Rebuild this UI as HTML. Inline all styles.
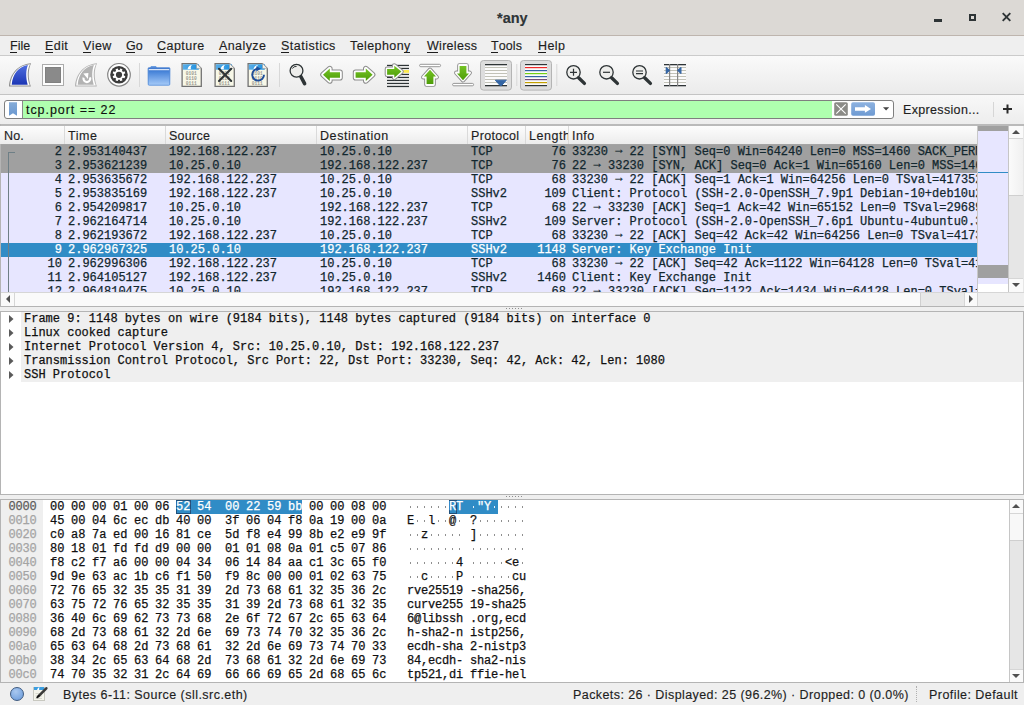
<!DOCTYPE html><html><head><meta charset="utf-8"><title>any</title><style>
*{margin:0;padding:0;box-sizing:border-box}
html,body{width:1024px;height:705px;overflow:hidden}
body{position:relative;background:#efefef;font-family:"Liberation Sans",sans-serif;font-size:12.5px;letter-spacing:.4px;color:#1e1e1e}
.a{position:absolute}
.m{font-family:"Liberation Mono",monospace;font-size:12px;letter-spacing:0;white-space:pre;-webkit-text-stroke:.25px currentColor}
.t{white-space:pre;line-height:14px;-webkit-text-stroke:.15px currentColor}
u{text-decoration:none;position:relative;display:inline-block}u::after{content:'';position:absolute;left:0;right:1px;top:13px;height:1px;background:#1e1e1e}
svg{position:absolute;overflow:visible}
</style></head><body><div class="a" style="left:0;top:0;width:1024px;height:36px;background:#dcd9d5;border-bottom:1px solid #beb5ae"></div><div class="a t" style="left:497px;top:9px;font-weight:bold;font-size:14.5px;letter-spacing:0;color:#2e3436;line-height:18px">*any</div><div class="a" style="left:934px;top:19px;width:8px;height:2.6px;background:#2e3436"></div><div class="a" style="left:969px;top:14px;width:6.5px;height:6.5px;border:2px solid #2e3436"></div><svg style="left:1001px;top:12px" width="10" height="10"><path d="M1.7 1.2L9.3 8.8M9.3 1.2L1.7 8.8" stroke="#2e3436" stroke-width="1.9"/></svg><div class="a" style="left:0;top:36px;width:1024px;height:19px;background:#efefef"></div><div class="a t" style="left:10px;top:39px;letter-spacing:-0.015px"><u>F</u>ile</div><div class="a t" style="left:45px;top:39px;letter-spacing:0.425px"><u>E</u>dit</div><div class="a t" style="left:83px;top:39px;letter-spacing:0.402px"><u>V</u>iew</div><div class="a t" style="left:126px;top:39px;letter-spacing:-0.017px"><u>G</u>o</div><div class="a t" style="left:157px;top:39px;letter-spacing:0.464px"><u>C</u>apture</div><div class="a t" style="left:219px;top:39px;letter-spacing:0.402px"><u>A</u>nalyze</div><div class="a t" style="left:281px;top:39px;letter-spacing:0.484px"><u>S</u>tatistics</div><div class="a t" style="left:350px;top:39px;letter-spacing:0.409px">Telephon<u>y</u></div><div class="a t" style="left:427px;top:39px;letter-spacing:0.286px"><u>W</u>ireless</div><div class="a t" style="left:491px;top:39px;letter-spacing:0.076px"><u>T</u>ools</div><div class="a t" style="left:538px;top:39px;letter-spacing:0.413px"><u>H</u>elp</div><div class="a" style="left:0;top:55px;width:1024px;height:1px;background:#cbcbcb"></div><div class="a" style="left:0;top:56px;width:1024px;height:38px;background:linear-gradient(#fafafa,#ebebeb)"></div><div class="a" style="left:0;top:94px;width:1024px;height:1px;background:#c4c4c4"></div><svg style="left:0;top:0" width="700" height="95" viewBox="0 0 700 95">
<defs>
<linearGradient id="gb" x1="0" y1="0" x2="0" y2="1"><stop offset="0" stop-color="#4f6ee0"/><stop offset="1" stop-color="#1c36b4"/></linearGradient>
<linearGradient id="gf" x1="0" y1="0" x2="0" y2="1"><stop offset="0" stop-color="#2f6cc8"/><stop offset="0.25" stop-color="#4a86da"/><stop offset="1" stop-color="#a9cdf9"/></linearGradient>
<linearGradient id="gbar" x1="0" y1="0" x2="1" y2="0"><stop offset="0" stop-color="#5aaee8"/><stop offset="1" stop-color="#1b8fe0"/></linearGradient>
<linearGradient id="gg" x1="0" y1="0" x2="0" y2="1"><stop offset="0" stop-color="#74c324"/><stop offset="1" stop-color="#4d9c08"/></linearGradient>
<g id="file">
 <path d="M0.6,0.6 H15 L19.8,5.4 V23.4 H0.6 Z" fill="#f8f8e8" stroke="#727272" stroke-width="1.3"/>
 <rect x="1.3" y="1.3" width="16" height="5.4" fill="url(#gbar)"/>
 <path d="M15,0.6 V5.4 H19.8 Z" fill="#f4f4ee" stroke="#9a9a9a" stroke-width=".6"/>
 <path d="M6,6.3 C6.5,3.5 8.5,2 10.5,2 C9,3.5 9,5 9.5,6.3 Z" fill="#fff"/>
 <text x="4.2" y="12.2" font-family="Liberation Mono" font-size="4.6" fill="#9a9a92" letter-spacing="0" font-weight="bold">0101</text>
 <text x="4.2" y="17" font-family="Liberation Mono" font-size="4.6" fill="#9a9a92" letter-spacing="0" font-weight="bold">0110</text>
 <text x="4.2" y="21.5" font-family="Liberation Mono" font-size="4.6" fill="#9a9a92" letter-spacing="0" font-weight="bold">0111</text>
</g>
</defs>
<!-- shark fin -->
<path d="M9,86.6 C9.6,74 18,64 31.1,63.2 C28,70 28,78 30.9,86.6 Z" fill="#8e8e8e"/>
<path d="M10.2,85.6 C10.9,74 18.5,65 30,64.2 C27,70 27,78 29.8,85.6 Z" fill="#fff"/>
<path d="M11.7,84.7 C12.5,74 19,66.5 27.9,65.1 C26,70 25.5,77 27.7,84.7 Z" fill="url(#gb)"/>
<!-- stop -->
<rect x="42.5" y="64.5" width="21" height="21" fill="#fdfdfd" stroke="#ababab" stroke-width="1"/>
<rect x="45.5" y="67.5" width="15" height="15" fill="#8a8a8a" stroke="#808080" stroke-width="1"/>
<!-- restart fin -->
<path d="M75,86.6 C75.6,74 84,64 97.1,63.2 C94,70 94,78 96.9,86.6 Z" fill="#b4b4b4"/>
<path d="M76.2,85.6 C76.9,74 84.5,65 96,64.2 C93,70 93,78 95.8,85.6 Z" fill="#fff"/>
<path d="M77.7,84.7 C78.5,74 85,66.5 93.9,65.1 C92,70 91.5,77 93.7,84.7 Z" fill="#b3b3b3"/>
<path d="M83.6,77.6 A3.4,3.4 0 1 0 90,77.4" fill="none" stroke="#fff" stroke-width="2.2"/>
<path d="M83.3,73.6 L88.4,72.9 L87.9,79 Z" fill="#fff"/>
<!-- gear -->
<circle cx="119" cy="74.8" r="11.3" fill="#fff" stroke="#848484" stroke-width="1.2"/>
<circle cx="119" cy="74.8" r="8.8" fill="#3b3b3b"/>
<g transform="translate(119 74.8) rotate(22.5)" fill="#fff">
 <circle r="4.9"/>
 <rect x="-1.2" y="-6.4" width="2.4" height="12.8" rx=".4"/>
 <rect x="-1.2" y="-6.4" width="2.4" height="12.8" rx=".4" transform="rotate(45)"/>
 <rect x="-1.2" y="-6.4" width="2.4" height="12.8" rx=".4" transform="rotate(90)"/>
 <rect x="-1.2" y="-6.4" width="2.4" height="12.8" rx=".4" transform="rotate(135)"/>
</g>
<circle cx="119" cy="74.8" r="3.1" fill="#3b3b3b"/>
<!-- separator -->
<rect x="139" y="63" width="1" height="24" fill="#d8d8d8"/>
<!-- folder -->
<path d="M150,68 L151,66 H156 L157,68 Z" fill="#6d9ee0"/>
<rect x="147.8" y="67.6" width="22.4" height="18" rx="1" fill="url(#gf)"/>
<rect x="148.5" y="69.2" width="21" height="1" fill="#fff"/>
<rect x="148.3" y="68" width="21.4" height="17.2" rx="1" fill="none" stroke="#5b8fd8" stroke-width=".8"/>
<use href="#file" x="181.5" y="63"/>
<use href="#file" x="214.5" y="63"/>
<use href="#file" x="247.5" y="63"/>
<path d="M219,68.8 L231.2,81 M231.2,68.8 L219,81" stroke="#2e3436" stroke-width="2.1" stroke-linecap="round"/>
<path d="M264,74.7 A5.9,5.9 0 1 1 257.6,68.8" fill="none" stroke="#1f4e9a" stroke-width="1.9"/>
<path d="M256.3,66.2 L261,68.8 L256.3,71.4 Z" fill="#1f4e9a"/>
<!-- separator -->
<rect x="279" y="63" width="1" height="24" fill="#d8d8d8"/>
<!-- magnifier -->
<path d="M300.8,76.5 L304.6,83.6" stroke="#2e3436" stroke-width="3.6" stroke-linecap="round"/>
<circle cx="296.5" cy="70.7" r="6.4" fill="#eeeeec" stroke="#2e3436" stroke-width="1.3"/>
<path d="M292.3,68.6 A4.4,4.4 0 0 1 296.6,66.4" fill="none" stroke="#2e3436" stroke-width="1"/>
<!-- back arrow -->
<path d="M323,74.7 L329.8,68.6 V72.3 H340 V77.7 H329.8 V80.9 Z" fill="#fff" stroke="#8c8c8c" stroke-width="5.6" stroke-linejoin="round"/>
<path d="M323,74.7 L329.8,68.6 V72.3 H340 V77.7 H329.8 V80.9 Z" fill="#fff" stroke="#fdfdfd" stroke-width="3.6" stroke-linejoin="round"/>
<path d="M323,74.7 L329.8,68.6 V72.3 H340 V77.7 H329.8 V80.9 Z" fill="url(#gg)"/>
<!-- fwd arrow -->
<g transform="translate(695.6 0) scale(-1 1)">
<path d="M323,74.7 L329.8,68.6 V72.3 H340 V77.7 H329.8 V80.9 Z" fill="#fff" stroke="#8c8c8c" stroke-width="5.6" stroke-linejoin="round"/>
<path d="M323,74.7 L329.8,68.6 V72.3 H340 V77.7 H329.8 V80.9 Z" fill="#fff" stroke="#fdfdfd" stroke-width="3.6" stroke-linejoin="round"/>
<path d="M323,74.7 L329.8,68.6 V72.3 H340 V77.7 H329.8 V80.9 Z" fill="url(#gg)"/>
</g>
<!-- goto packet -->
<rect x="387" y="64" width="22" height="23" fill="#fcfcfc"/>
<g fill="#2e3436">
<rect x="387" y="64.8" width="22" height="1.3"/><rect x="387" y="67.8" width="22" height="1.3"/>
<rect x="387" y="73.8" width="22" height="1.3"/><rect x="387" y="76.8" width="22" height="1.3"/><rect x="387" y="79.8" width="22" height="1.3"/>
<rect x="387" y="82.8" width="22" height="1.3"/><rect x="387" y="85.8" width="22" height="1.3"/>
</g>
<rect x="403.3" y="70" width="5.7" height="2.8" fill="#fce94f"/>
<path d="M387.1,68.9 H394.3 V65.7 L401.4,71.6 L394.3,77.7 V74.7 H387.1 Z" fill="#fff" stroke="#8c8c8c" stroke-width="4.8" stroke-linejoin="round"/>
<path d="M387.1,68.9 H394.3 V65.7 L401.4,71.6 L394.3,77.7 V74.7 H387.1 Z" fill="#fff" stroke="#fdfdfd" stroke-width="2.8" stroke-linejoin="round"/>
<path d="M387.1,68.9 H394.3 V65.7 L401.4,71.6 L394.3,77.7 V74.7 H387.1 Z" fill="url(#gg)"/>
<!-- first packet (up) -->
<rect x="419.6" y="64.3" width="21" height="2.4" rx="1.2" fill="#fff" stroke="#8c8c8c" stroke-width=".9"/>
<path d="M430,69.8 L436.7,77.2 H433.6 V84.6 H426.4 V77.2 H423.3 Z" fill="#fff" stroke="#8c8c8c" stroke-width="4.4" stroke-linejoin="round"/>
<path d="M430,69.8 L436.7,77.2 H433.6 V84.6 H426.4 V77.2 H423.3 Z" fill="#fff" stroke="#fdfdfd" stroke-width="2.6" stroke-linejoin="round"/>
<path d="M430,69.8 L436,76.6 H433.4 V84 H426.6 V76.6 H424 Z" fill="url(#gg)"/>
<!-- last packet (down) -->
<rect x="452.6" y="83.4" width="21" height="2.4" rx="1.2" fill="#fff" stroke="#8c8c8c" stroke-width=".9"/>
<path d="M463,80.2 L469.7,72.8 H466.6 V65.4 H459.4 V72.8 H456.3 Z" fill="#fff" stroke="#8c8c8c" stroke-width="4.4" stroke-linejoin="round"/>
<path d="M463,80.2 L469.7,72.8 H466.6 V65.4 H459.4 V72.8 H456.3 Z" fill="#fff" stroke="#fdfdfd" stroke-width="2.6" stroke-linejoin="round"/>
<path d="M463,80.2 L469,73.4 H466.4 V66 H459.6 V73.4 H457 Z" fill="url(#gg)"/>
<!-- autoscroll button -->
<rect x="480.5" y="60.5" width="31" height="29.6" rx="3" fill="#dddddd" stroke="#b4b4b4" stroke-width="1"/>
<rect x="485" y="64" width="22" height="22" fill="#fbfbfb"/>
<g fill="#c2c2b8"><rect x="485" y="67" width="22" height="1"/><rect x="485" y="70" width="22" height="1"/><rect x="485" y="73" width="22" height="1"/><rect x="485" y="76" width="22" height="1"/><rect x="485" y="79" width="22" height="1"/><rect x="485" y="82" width="22" height="1"/></g>
<rect x="485" y="64" width="22" height="1.3" fill="#2e3436"/><rect x="485" y="85" width="22" height="1.3" fill="#2e3436"/>
<path d="M495.3,80.2 H506.3 L501.5,85.6 H500.1 Z" fill="#3465a4" stroke="#3465a4" stroke-width="1" stroke-linejoin="round"/>
<rect x="516.3" y="64" width="1" height="22" fill="#d8d8d8"/>
<!-- colorize button -->
<rect x="520.5" y="60.5" width="31" height="29.6" rx="3" fill="#dddddd" stroke="#b4b4b4" stroke-width="1"/>
<rect x="525" y="64" width="22" height="22" fill="#fbfbfb"/>
<rect x="525" y="64" width="22" height="1.2" fill="#2e3436"/>
<rect x="525" y="67" width="22" height="1.2" fill="#ef2929"/>
<rect x="525" y="70" width="22" height="1.2" fill="#3465a4"/>
<rect x="525" y="73" width="22" height="1.2" fill="#73d216"/>
<rect x="525" y="76" width="22" height="1.2" fill="#3465a4"/>
<rect x="525" y="79" width="22" height="1.2" fill="#75507b"/>
<rect x="525" y="82" width="22" height="1.2" fill="#c4a000"/>
<rect x="525" y="85" width="22" height="1.2" fill="#2e3436"/>
<rect x="556.3" y="64" width="1" height="22" fill="#d8d8d8"/>
<!-- zoom in/out/normal -->
<g id="zm">
<circle cx="573.5" cy="72.3" r="6.7" fill="#eeeeec" stroke="#2e3436" stroke-width="1.3"/>
<path d="M578.6,77.8 L584.4,83.4" stroke="#2e3436" stroke-width="3.4" stroke-linecap="round"/>
</g>
<path d="M570,72.3 H577 M573.5,68.8 V75.8" stroke="#2e3436" stroke-width="1.2"/>
<use href="#zm" x="33" y="0"/>
<path d="M603,72.3 H610" stroke="#2e3436" stroke-width="1.2"/>
<use href="#zm" x="66" y="0"/>
<path d="M636,71 H643 M636,73.6 H643" stroke="#2e3436" stroke-width="1.2"/>
<!-- resize columns -->
<rect x="664" y="64" width="22" height="22" fill="#fbfbfb"/>
<g fill="#c2c2b8"><rect x="664" y="67" width="22" height="1"/><rect x="664" y="70" width="22" height="1"/><rect x="664" y="73" width="22" height="1"/><rect x="664" y="76" width="22" height="1"/><rect x="664" y="79" width="22" height="1"/><rect x="664" y="82" width="22" height="1"/></g>
<rect x="664" y="64" width="22" height="1.3" fill="#2e3436"/><rect x="664" y="85" width="22" height="1.3" fill="#2e3436"/>
<rect x="669" y="64" width="1.2" height="22" fill="#858585"/><rect x="677" y="64" width="1.2" height="22" fill="#858585"/>
<path d="M666.3,67.6 L669.4,70.4 L666.3,73.3 Z" fill="#3465a4" stroke="#3465a4" stroke-width="1.2" stroke-linejoin="round"/>
<path d="M680.9,67.6 L677.8,70.4 L680.9,73.3 Z" fill="#3465a4" stroke="#3465a4" stroke-width="1.2" stroke-linejoin="round"/>
</svg>
<div class="a" style="left:0;top:95px;width:1024px;height:29px;background:linear-gradient(#f8f8f8,#ededed)"></div><div class="a" style="left:4px;top:100px;width:890px;height:19px;border:1px solid #7f7f7f;border-radius:3px;background:#fff"></div><div class="a" style="left:22px;top:101px;width:1px;height:17px;background:#8a8a8a"></div><div class="a" style="left:23px;top:101px;width:809px;height:17px;background:#afffaf"></div><svg style="left:0;top:0" width="30" height="120"><defs><linearGradient id="bm" x1="0" y1="0" x2="0" y2="1"><stop offset="0" stop-color="#86acd8"/><stop offset="1" stop-color="#6a98d0"/></linearGradient></defs><path d="M9,102.2 H17 V115.8 L13,113.2 L9,115.8 Z" fill="url(#bm)"/></svg><div class="a t" style="left:26px;top:102px;line-height:16px;color:#101010;letter-spacing:0.943px">tcp.port == 22</div><svg style="left:820px;top:96px" width="80" height="26"><defs><linearGradient id="ap" x1="0" y1="0" x2="0" y2="1"><stop offset="0" stop-color="#8db2e0"/><stop offset="1" stop-color="#6e9ad2"/></linearGradient></defs><rect x="14.2" y="6.2" width="13.6" height="13.6" rx="1.6" fill="#8b8b87"/><path d="M16.3,8.3 L25.7,17.7 M25.7,8.3 L16.3,17.7" stroke="#fff" stroke-width="1.1"/><rect x="31.2" y="6.2" width="23.8" height="13.6" rx="1.8" fill="url(#ap)"/><path d="M35,11.3 H44.9 V8.9 L51,12.9 L44.9,16.7 V14.7 H35 Z" fill="#fff"/><path d="M63,11.3 H69.2 L66.1,14.4 Z" fill="#444"/></svg><div class="a t" style="left:903px;top:103px;letter-spacing:0.333px">Expression...</div><div class="a" style="left:993px;top:102px;width:1px;height:15px;background:#d6d6d6"></div><svg style="left:1003px;top:104px" width="10" height="10"><path d="M4.5 0.5V9.5M0 5H9" stroke="#2a2a2a" stroke-width="2"/></svg><div class="a" style="left:0;top:124px;width:1024px;height:2px;background:#bababa"></div><div class="a" style="left:0;top:124px;width:1px;height:183px;background:#b4b4b4"></div><div class="a" style="left:0;top:126px;width:977px;height:18px;background:linear-gradient(#fdfdfd,#ececec)"></div><div class="a t" style="left:1px;top:126px;width:64px;overflow:hidden;padding-left:3px;padding-top:3px;border-right:1px solid #dadada;height:18px;letter-spacing:0.157px">No.</div><div class="a t" style="left:65px;top:126px;width:101px;overflow:hidden;padding-left:3px;padding-top:3px;border-right:1px solid #dadada;height:18px;letter-spacing:0.514px">Time</div><div class="a t" style="left:166px;top:126px;width:151px;overflow:hidden;padding-left:3px;padding-top:3px;border-right:1px solid #dadada;height:18px;letter-spacing:0.269px">Source</div><div class="a t" style="left:317px;top:126px;width:151px;overflow:hidden;padding-left:3px;padding-top:3px;border-right:1px solid #dadada;height:18px;letter-spacing:0.575px">Destination</div><div class="a t" style="left:468px;top:126px;width:58px;overflow:hidden;padding-left:3px;padding-top:3px;border-right:1px solid #dadada;height:18px;letter-spacing:0.313px">Protocol</div><div class="a t" style="left:526px;top:126px;width:43px;overflow:hidden;padding-left:3px;padding-top:3px;border-right:1px solid #dadada;height:18px;letter-spacing:0.527px">Length</div><div class="a t" style="left:569px;top:126px;width:409px;overflow:hidden;padding-left:3px;padding-top:3px;border-right:1px solid #dadada;height:18px;letter-spacing:0.466px">Info</div><div class="a" style="left:1px;top:144px;width:976px;height:1px;background:#a4a4a4"></div><div class="a" style="left:1px;top:145px;width:976px;height:147px;overflow:hidden"><div class="a m" style="left:0;top:0px;width:976px;height:14px;background:#a0a0a0;color:#12272e;line-height:14px"><span class="a" style="right:915px;top:0">2</span><span class="a" style="left:67px;top:0">2.953140437</span><span class="a" style="left:168px;top:0">192.168.122.237</span><span class="a" style="left:319px;top:0">10.25.0.10</span><span class="a" style="left:470px;top:0">TCP</span><span class="a" style="right:411px;top:0">76</span><span class="a" style="left:571px;top:0">33230 <span style='position:relative;top:-2px'>→</span> 22 [SYN] Seq=0 Win=64240 Len=0 MSS=1460 SACK_PERM=1 TSval=417352</span></div><div class="a m" style="left:0;top:14px;width:976px;height:14px;background:#a0a0a0;color:#12272e;line-height:14px"><span class="a" style="right:915px;top:0">3</span><span class="a" style="left:67px;top:0">2.953621239</span><span class="a" style="left:168px;top:0">10.25.0.10</span><span class="a" style="left:319px;top:0">192.168.122.237</span><span class="a" style="left:470px;top:0">TCP</span><span class="a" style="right:411px;top:0">76</span><span class="a" style="left:571px;top:0">22 <span style='position:relative;top:-2px'>→</span> 33230 [SYN, ACK] Seq=0 Ack=1 Win=65160 Len=0 MSS=1460 SACK_PERM=1</span></div><div class="a m" style="left:0;top:28px;width:976px;height:14px;background:#e7e6ff;color:#12272e;line-height:14px"><span class="a" style="right:915px;top:0">4</span><span class="a" style="left:67px;top:0">2.953635672</span><span class="a" style="left:168px;top:0">192.168.122.237</span><span class="a" style="left:319px;top:0">10.25.0.10</span><span class="a" style="left:470px;top:0">TCP</span><span class="a" style="right:411px;top:0">68</span><span class="a" style="left:571px;top:0">33230 <span style='position:relative;top:-2px'>→</span> 22 [ACK] Seq=1 Ack=1 Win=64256 Len=0 TSval=4173520</span></div><div class="a m" style="left:0;top:42px;width:976px;height:14px;background:#e7e6ff;color:#12272e;line-height:14px"><span class="a" style="right:915px;top:0">5</span><span class="a" style="left:67px;top:0">2.953835169</span><span class="a" style="left:168px;top:0">192.168.122.237</span><span class="a" style="left:319px;top:0">10.25.0.10</span><span class="a" style="left:470px;top:0">SSHv2</span><span class="a" style="right:411px;top:0">109</span><span class="a" style="left:571px;top:0">Client: Protocol (SSH-2.0-OpenSSH_7.9p1 Debian-10+deb10u2)</span></div><div class="a m" style="left:0;top:56px;width:976px;height:14px;background:#e7e6ff;color:#12272e;line-height:14px"><span class="a" style="right:915px;top:0">6</span><span class="a" style="left:67px;top:0">2.954209817</span><span class="a" style="left:168px;top:0">10.25.0.10</span><span class="a" style="left:319px;top:0">192.168.122.237</span><span class="a" style="left:470px;top:0">TCP</span><span class="a" style="right:411px;top:0">68</span><span class="a" style="left:571px;top:0">22 <span style='position:relative;top:-2px'>→</span> 33230 [ACK] Seq=1 Ack=42 Win=65152 Len=0 TSval=29689</span></div><div class="a m" style="left:0;top:70px;width:976px;height:14px;background:#e7e6ff;color:#12272e;line-height:14px"><span class="a" style="right:915px;top:0">7</span><span class="a" style="left:67px;top:0">2.962164714</span><span class="a" style="left:168px;top:0">10.25.0.10</span><span class="a" style="left:319px;top:0">192.168.122.237</span><span class="a" style="left:470px;top:0">SSHv2</span><span class="a" style="right:411px;top:0">109</span><span class="a" style="left:571px;top:0">Server: Protocol (SSH-2.0-OpenSSH_7.6p1 Ubuntu-4ubuntu0.3)</span></div><div class="a m" style="left:0;top:84px;width:976px;height:14px;background:#e7e6ff;color:#12272e;line-height:14px"><span class="a" style="right:915px;top:0">8</span><span class="a" style="left:67px;top:0">2.962193672</span><span class="a" style="left:168px;top:0">192.168.122.237</span><span class="a" style="left:319px;top:0">10.25.0.10</span><span class="a" style="left:470px;top:0">TCP</span><span class="a" style="right:411px;top:0">68</span><span class="a" style="left:571px;top:0">33230 <span style='position:relative;top:-2px'>→</span> 22 [ACK] Seq=42 Ack=42 Win=64256 Len=0 TSval=41735</span></div><div class="a m" style="left:0;top:98px;width:976px;height:14px;background:#308cc6;color:#ffffff;line-height:14px"><span class="a" style="right:915px;top:0">9</span><span class="a" style="left:67px;top:0">2.962967325</span><span class="a" style="left:168px;top:0">10.25.0.10</span><span class="a" style="left:319px;top:0">192.168.122.237</span><span class="a" style="left:470px;top:0">SSHv2</span><span class="a" style="right:411px;top:0">1148</span><span class="a" style="left:571px;top:0">Server: Key Exchange Init</span></div><div class="a m" style="left:0;top:112px;width:976px;height:14px;background:#e7e6ff;color:#12272e;line-height:14px"><span class="a" style="right:915px;top:0">10</span><span class="a" style="left:67px;top:0">2.962996306</span><span class="a" style="left:168px;top:0">192.168.122.237</span><span class="a" style="left:319px;top:0">10.25.0.10</span><span class="a" style="left:470px;top:0">TCP</span><span class="a" style="right:411px;top:0">68</span><span class="a" style="left:571px;top:0">33230 <span style='position:relative;top:-2px'>→</span> 22 [ACK] Seq=42 Ack=1122 Win=64128 Len=0 TSval=41735</span></div><div class="a m" style="left:0;top:126px;width:976px;height:14px;background:#e7e6ff;color:#12272e;line-height:14px"><span class="a" style="right:915px;top:0">11</span><span class="a" style="left:67px;top:0">2.964105127</span><span class="a" style="left:168px;top:0">192.168.122.237</span><span class="a" style="left:319px;top:0">10.25.0.10</span><span class="a" style="left:470px;top:0">SSHv2</span><span class="a" style="right:411px;top:0">1460</span><span class="a" style="left:571px;top:0">Client: Key Exchange Init</span></div><div class="a m" style="left:0;top:140px;width:976px;height:14px;background:#e7e6ff;color:#12272e;line-height:14px"><span class="a" style="right:915px;top:0">12</span><span class="a" style="left:67px;top:0">2.964810475</span><span class="a" style="left:168px;top:0">10.25.0.10</span><span class="a" style="left:319px;top:0">192.168.122.237</span><span class="a" style="left:470px;top:0">TCP</span><span class="a" style="right:411px;top:0">68</span><span class="a" style="left:571px;top:0">22 <span style='position:relative;top:-2px'>→</span> 33230 [ACK] Seq=1122 Ack=1434 Win=64128 Len=0 TSval=2968</span></div><div class="a" style="left:7px;top:7px;width:1px;height:140px;background:#6e7f86"></div><div class="a" style="left:7px;top:7px;width:7px;height:1px;background:#6e7f86"></div></div><div class="a" style="left:977px;top:126px;width:31px;height:166px;background:#e7e6ff;border-left:1px solid #c8c8c8"></div><div class="a" style="left:978px;top:126px;width:30px;height:5px;background:#a0a0a0"></div><div class="a" style="left:978px;top:172px;width:30px;height:1px;background:#308cc6"></div><div class="a" style="left:978px;top:265px;width:30px;height:13px;background:#a0a0a0"></div><div class="a" style="left:978px;top:284px;width:30px;height:8px;background:#fff"></div><div class="a" style="left:1008px;top:126px;width:16px;height:166px;background:#e6e6e6;border-left:1px solid #c6c6c6"></div><div class="a" style="left:1009px;top:126px;width:14px;height:13px;background:#fafafa;border-bottom:1px solid #d6d6d6"></div><div class="a" style="left:1009px;top:139px;width:14px;height:57px;background:linear-gradient(90deg,#fbfbfb,#f0f0f0);border-bottom:1px solid #cfcfcf"></div><div class="a" style="left:1009px;top:278px;width:14px;height:14px;background:#fafafa;border-top:1px solid #d6d6d6"></div><svg style="left:1012px;top:129px" width="8" height="6"><path d="M0 5L4 1L8 5Z" fill="#505050"/></svg><svg style="left:1012px;top:282px" width="8" height="6"><path d="M0 1L4 5L8 1Z" fill="#505050"/></svg><div class="a" style="left:1px;top:292px;width:976px;height:14px;background:#fafafa;border-top:1px solid #d6d6d6"></div><div class="a" style="left:14px;top:293px;width:1px;height:13px;background:#d6d6d6"></div><div class="a" style="left:920px;top:293px;width:44px;height:13px;background:#e8e8e8;border-left:1px solid #d0d0d0"></div><div class="a" style="left:964px;top:293px;width:13px;height:13px;background:#fafafa;border-left:1px solid #d6d6d6"></div><svg style="left:5px;top:295px" width="6" height="8"><path d="M5 0L1 4L5 8Z" fill="#505050"/></svg><svg style="left:968px;top:295px" width="6" height="8"><path d="M1 0L5 4L1 8Z" fill="#505050"/></svg><div class="a" style="left:977px;top:292px;width:47px;height:14px;background:#efefef;border-top:1px solid #d6d6d6;border-left:1px solid #d6d6d6"></div><div class="a" style="left:0;top:306px;width:1024px;height:1px;background:#b4b4b4"></div><div class="a" style="left:0;top:311px;width:1024px;height:184px;background:#fff;border:1px solid #b4b4b4"></div><div class="a" style="left:21px;top:312px;width:1002px;height:70px;background:#efefef"></div><div class="a m" style="left:24px;top:312px;line-height:14px;color:#101010">Frame 9: 1148 bytes on wire (9184 bits), 1148 bytes captured (9184 bits) on interface 0</div><svg style="left:9px;top:315px" width="5" height="8"><path d="M0 0L4.5 4L0 8Z" fill="#5a5a5a"/></svg><div class="a m" style="left:24px;top:326px;line-height:14px;color:#101010">Linux cooked capture</div><svg style="left:9px;top:329px" width="5" height="8"><path d="M0 0L4.5 4L0 8Z" fill="#5a5a5a"/></svg><div class="a m" style="left:24px;top:340px;line-height:14px;color:#101010">Internet Protocol Version 4, Src: 10.25.0.10, Dst: 192.168.122.237</div><svg style="left:9px;top:343px" width="5" height="8"><path d="M0 0L4.5 4L0 8Z" fill="#5a5a5a"/></svg><div class="a m" style="left:24px;top:354px;line-height:14px;color:#101010">Transmission Control Protocol, Src Port: 22, Dst Port: 33230, Seq: 42, Ack: 42, Len: 1080</div><svg style="left:9px;top:357px" width="5" height="8"><path d="M0 0L4.5 4L0 8Z" fill="#5a5a5a"/></svg><div class="a m" style="left:24px;top:368px;line-height:14px;color:#101010">SSH Protocol</div><svg style="left:9px;top:371px" width="5" height="8"><path d="M0 0L4.5 4L0 8Z" fill="#5a5a5a"/></svg><div class="a" style="left:0;top:499px;width:1024px;height:184px;background:#fff;border:1px solid #b4b4b4"></div><div class="a" style="left:1px;top:500px;width:42px;height:182px;background:#efefef"></div><div class="a" style="left:176px;top:500px;width:126px;height:14px;background:#308cc6"></div><div class="a" style="left:449px;top:500px;width:49px;height:14px;background:#308cc6"></div><div class="a" style="left:176px;top:500px;width:15px;height:14px;border:1px solid #20507a"></div><div class="a" style="left:449px;top:500px;width:8px;height:14px;border:1px solid #20507a"></div><div class="a m" style="left:8.5px;top:500px;line-height:14px;color:#5c5c5c;letter-spacing:-.2px">0000</div><div class="a m" style="left:50.0px;top:500px;line-height:14px;color:#101010">00</div><div class="a" style="left:409.6px;top:505.8px;width:1.8px;height:1.8px;background:#8f8f8f"></div><div class="a m" style="left:71.0px;top:500px;line-height:14px;color:#101010">00</div><div class="a" style="left:416.6px;top:505.8px;width:1.8px;height:1.8px;background:#8f8f8f"></div><div class="a m" style="left:92.0px;top:500px;line-height:14px;color:#101010">00</div><div class="a" style="left:423.6px;top:505.8px;width:1.8px;height:1.8px;background:#8f8f8f"></div><div class="a m" style="left:113.0px;top:500px;line-height:14px;color:#101010">01</div><div class="a" style="left:430.6px;top:505.8px;width:1.8px;height:1.8px;background:#8f8f8f"></div><div class="a m" style="left:134.0px;top:500px;line-height:14px;color:#101010">00</div><div class="a" style="left:437.6px;top:505.8px;width:1.8px;height:1.8px;background:#8f8f8f"></div><div class="a m" style="left:155.0px;top:500px;line-height:14px;color:#101010">06</div><div class="a" style="left:444.6px;top:505.8px;width:1.8px;height:1.8px;background:#8f8f8f"></div><div class="a m" style="left:176.0px;top:500px;line-height:14px;color:#ffffff">52</div><div class="a m" style="left:449.0px;top:500px;line-height:14px;color:#ffffff">R</div><div class="a m" style="left:197.0px;top:500px;line-height:14px;color:#ffffff">54</div><div class="a m" style="left:456.0px;top:500px;line-height:14px;color:#ffffff">T</div><div class="a m" style="left:225.0px;top:500px;line-height:14px;color:#ffffff">00</div><div class="a" style="left:472.6px;top:505.8px;width:1.8px;height:1.8px;background:#e8f0f8"></div><div class="a m" style="left:246.0px;top:500px;line-height:14px;color:#ffffff">22</div><div class="a m" style="left:477.0px;top:500px;line-height:14px;color:#ffffff">&quot;</div><div class="a m" style="left:267.0px;top:500px;line-height:14px;color:#ffffff">59</div><div class="a m" style="left:484.0px;top:500px;line-height:14px;color:#ffffff">Y</div><div class="a m" style="left:288.0px;top:500px;line-height:14px;color:#ffffff">bb</div><div class="a" style="left:493.6px;top:505.8px;width:1.8px;height:1.8px;background:#e8f0f8"></div><div class="a m" style="left:309.0px;top:500px;line-height:14px;color:#101010">00</div><div class="a" style="left:500.6px;top:505.8px;width:1.8px;height:1.8px;background:#8f8f8f"></div><div class="a m" style="left:330.0px;top:500px;line-height:14px;color:#101010">00</div><div class="a" style="left:507.6px;top:505.8px;width:1.8px;height:1.8px;background:#8f8f8f"></div><div class="a m" style="left:351.0px;top:500px;line-height:14px;color:#101010">08</div><div class="a" style="left:514.6px;top:505.8px;width:1.8px;height:1.8px;background:#8f8f8f"></div><div class="a m" style="left:372.0px;top:500px;line-height:14px;color:#101010">00</div><div class="a" style="left:521.6px;top:505.8px;width:1.8px;height:1.8px;background:#8f8f8f"></div><div class="a m" style="left:8.5px;top:514px;line-height:14px;color:#a4a4a4;letter-spacing:-.2px">0010</div><div class="a m" style="left:50.0px;top:514px;line-height:14px;color:#101010">45</div><div class="a m" style="left:407.0px;top:514px;line-height:14px;color:#101010">E</div><div class="a m" style="left:71.0px;top:514px;line-height:14px;color:#101010">00</div><div class="a" style="left:416.6px;top:519.8px;width:1.8px;height:1.8px;background:#8f8f8f"></div><div class="a m" style="left:92.0px;top:514px;line-height:14px;color:#101010">04</div><div class="a" style="left:423.6px;top:519.8px;width:1.8px;height:1.8px;background:#8f8f8f"></div><div class="a m" style="left:113.0px;top:514px;line-height:14px;color:#101010">6c</div><div class="a m" style="left:428.0px;top:514px;line-height:14px;color:#101010">l</div><div class="a m" style="left:134.0px;top:514px;line-height:14px;color:#101010">ec</div><div class="a" style="left:437.6px;top:519.8px;width:1.8px;height:1.8px;background:#8f8f8f"></div><div class="a m" style="left:155.0px;top:514px;line-height:14px;color:#101010">db</div><div class="a" style="left:444.6px;top:519.8px;width:1.8px;height:1.8px;background:#8f8f8f"></div><div class="a m" style="left:176.0px;top:514px;line-height:14px;color:#101010">40</div><div class="a m" style="left:449.0px;top:514px;line-height:14px;color:#101010">@</div><div class="a m" style="left:197.0px;top:514px;line-height:14px;color:#101010">00</div><div class="a" style="left:458.6px;top:519.8px;width:1.8px;height:1.8px;background:#8f8f8f"></div><div class="a m" style="left:225.0px;top:514px;line-height:14px;color:#101010">3f</div><div class="a m" style="left:470.0px;top:514px;line-height:14px;color:#101010">?</div><div class="a m" style="left:246.0px;top:514px;line-height:14px;color:#101010">06</div><div class="a" style="left:479.6px;top:519.8px;width:1.8px;height:1.8px;background:#8f8f8f"></div><div class="a m" style="left:267.0px;top:514px;line-height:14px;color:#101010">04</div><div class="a" style="left:486.6px;top:519.8px;width:1.8px;height:1.8px;background:#8f8f8f"></div><div class="a m" style="left:288.0px;top:514px;line-height:14px;color:#101010">f8</div><div class="a" style="left:493.6px;top:519.8px;width:1.8px;height:1.8px;background:#8f8f8f"></div><div class="a m" style="left:309.0px;top:514px;line-height:14px;color:#101010">0a</div><div class="a" style="left:500.6px;top:519.8px;width:1.8px;height:1.8px;background:#8f8f8f"></div><div class="a m" style="left:330.0px;top:514px;line-height:14px;color:#101010">19</div><div class="a" style="left:507.6px;top:519.8px;width:1.8px;height:1.8px;background:#8f8f8f"></div><div class="a m" style="left:351.0px;top:514px;line-height:14px;color:#101010">00</div><div class="a" style="left:514.6px;top:519.8px;width:1.8px;height:1.8px;background:#8f8f8f"></div><div class="a m" style="left:372.0px;top:514px;line-height:14px;color:#101010">0a</div><div class="a" style="left:521.6px;top:519.8px;width:1.8px;height:1.8px;background:#8f8f8f"></div><div class="a m" style="left:8.5px;top:528px;line-height:14px;color:#a4a4a4;letter-spacing:-.2px">0020</div><div class="a m" style="left:50.0px;top:528px;line-height:14px;color:#101010">c0</div><div class="a" style="left:409.6px;top:533.8px;width:1.8px;height:1.8px;background:#8f8f8f"></div><div class="a m" style="left:71.0px;top:528px;line-height:14px;color:#101010">a8</div><div class="a" style="left:416.6px;top:533.8px;width:1.8px;height:1.8px;background:#8f8f8f"></div><div class="a m" style="left:92.0px;top:528px;line-height:14px;color:#101010">7a</div><div class="a m" style="left:421.0px;top:528px;line-height:14px;color:#101010">z</div><div class="a m" style="left:113.0px;top:528px;line-height:14px;color:#101010">ed</div><div class="a" style="left:430.6px;top:533.8px;width:1.8px;height:1.8px;background:#8f8f8f"></div><div class="a m" style="left:134.0px;top:528px;line-height:14px;color:#101010">00</div><div class="a" style="left:437.6px;top:533.8px;width:1.8px;height:1.8px;background:#8f8f8f"></div><div class="a m" style="left:155.0px;top:528px;line-height:14px;color:#101010">16</div><div class="a" style="left:444.6px;top:533.8px;width:1.8px;height:1.8px;background:#8f8f8f"></div><div class="a m" style="left:176.0px;top:528px;line-height:14px;color:#101010">81</div><div class="a" style="left:451.6px;top:533.8px;width:1.8px;height:1.8px;background:#8f8f8f"></div><div class="a m" style="left:197.0px;top:528px;line-height:14px;color:#101010">ce</div><div class="a" style="left:458.6px;top:533.8px;width:1.8px;height:1.8px;background:#8f8f8f"></div><div class="a m" style="left:225.0px;top:528px;line-height:14px;color:#101010">5d</div><div class="a m" style="left:470.0px;top:528px;line-height:14px;color:#101010">]</div><div class="a m" style="left:246.0px;top:528px;line-height:14px;color:#101010">f8</div><div class="a" style="left:479.6px;top:533.8px;width:1.8px;height:1.8px;background:#8f8f8f"></div><div class="a m" style="left:267.0px;top:528px;line-height:14px;color:#101010">e4</div><div class="a" style="left:486.6px;top:533.8px;width:1.8px;height:1.8px;background:#8f8f8f"></div><div class="a m" style="left:288.0px;top:528px;line-height:14px;color:#101010">99</div><div class="a" style="left:493.6px;top:533.8px;width:1.8px;height:1.8px;background:#8f8f8f"></div><div class="a m" style="left:309.0px;top:528px;line-height:14px;color:#101010">8b</div><div class="a" style="left:500.6px;top:533.8px;width:1.8px;height:1.8px;background:#8f8f8f"></div><div class="a m" style="left:330.0px;top:528px;line-height:14px;color:#101010">e2</div><div class="a" style="left:507.6px;top:533.8px;width:1.8px;height:1.8px;background:#8f8f8f"></div><div class="a m" style="left:351.0px;top:528px;line-height:14px;color:#101010">e9</div><div class="a" style="left:514.6px;top:533.8px;width:1.8px;height:1.8px;background:#8f8f8f"></div><div class="a m" style="left:372.0px;top:528px;line-height:14px;color:#101010">9f</div><div class="a" style="left:521.6px;top:533.8px;width:1.8px;height:1.8px;background:#8f8f8f"></div><div class="a m" style="left:8.5px;top:542px;line-height:14px;color:#a4a4a4;letter-spacing:-.2px">0030</div><div class="a m" style="left:50.0px;top:542px;line-height:14px;color:#101010">80</div><div class="a" style="left:409.6px;top:547.8px;width:1.8px;height:1.8px;background:#8f8f8f"></div><div class="a m" style="left:71.0px;top:542px;line-height:14px;color:#101010">18</div><div class="a" style="left:416.6px;top:547.8px;width:1.8px;height:1.8px;background:#8f8f8f"></div><div class="a m" style="left:92.0px;top:542px;line-height:14px;color:#101010">01</div><div class="a" style="left:423.6px;top:547.8px;width:1.8px;height:1.8px;background:#8f8f8f"></div><div class="a m" style="left:113.0px;top:542px;line-height:14px;color:#101010">fd</div><div class="a" style="left:430.6px;top:547.8px;width:1.8px;height:1.8px;background:#8f8f8f"></div><div class="a m" style="left:134.0px;top:542px;line-height:14px;color:#101010">fd</div><div class="a" style="left:437.6px;top:547.8px;width:1.8px;height:1.8px;background:#8f8f8f"></div><div class="a m" style="left:155.0px;top:542px;line-height:14px;color:#101010">d9</div><div class="a" style="left:444.6px;top:547.8px;width:1.8px;height:1.8px;background:#8f8f8f"></div><div class="a m" style="left:176.0px;top:542px;line-height:14px;color:#101010">00</div><div class="a" style="left:451.6px;top:547.8px;width:1.8px;height:1.8px;background:#8f8f8f"></div><div class="a m" style="left:197.0px;top:542px;line-height:14px;color:#101010">00</div><div class="a" style="left:458.6px;top:547.8px;width:1.8px;height:1.8px;background:#8f8f8f"></div><div class="a m" style="left:225.0px;top:542px;line-height:14px;color:#101010">01</div><div class="a" style="left:472.6px;top:547.8px;width:1.8px;height:1.8px;background:#8f8f8f"></div><div class="a m" style="left:246.0px;top:542px;line-height:14px;color:#101010">01</div><div class="a" style="left:479.6px;top:547.8px;width:1.8px;height:1.8px;background:#8f8f8f"></div><div class="a m" style="left:267.0px;top:542px;line-height:14px;color:#101010">08</div><div class="a" style="left:486.6px;top:547.8px;width:1.8px;height:1.8px;background:#8f8f8f"></div><div class="a m" style="left:288.0px;top:542px;line-height:14px;color:#101010">0a</div><div class="a" style="left:493.6px;top:547.8px;width:1.8px;height:1.8px;background:#8f8f8f"></div><div class="a m" style="left:309.0px;top:542px;line-height:14px;color:#101010">01</div><div class="a" style="left:500.6px;top:547.8px;width:1.8px;height:1.8px;background:#8f8f8f"></div><div class="a m" style="left:330.0px;top:542px;line-height:14px;color:#101010">c5</div><div class="a" style="left:507.6px;top:547.8px;width:1.8px;height:1.8px;background:#8f8f8f"></div><div class="a m" style="left:351.0px;top:542px;line-height:14px;color:#101010">07</div><div class="a" style="left:514.6px;top:547.8px;width:1.8px;height:1.8px;background:#8f8f8f"></div><div class="a m" style="left:372.0px;top:542px;line-height:14px;color:#101010">86</div><div class="a" style="left:521.6px;top:547.8px;width:1.8px;height:1.8px;background:#8f8f8f"></div><div class="a m" style="left:8.5px;top:556px;line-height:14px;color:#a4a4a4;letter-spacing:-.2px">0040</div><div class="a m" style="left:50.0px;top:556px;line-height:14px;color:#101010">f8</div><div class="a" style="left:409.6px;top:561.8px;width:1.8px;height:1.8px;background:#8f8f8f"></div><div class="a m" style="left:71.0px;top:556px;line-height:14px;color:#101010">c2</div><div class="a" style="left:416.6px;top:561.8px;width:1.8px;height:1.8px;background:#8f8f8f"></div><div class="a m" style="left:92.0px;top:556px;line-height:14px;color:#101010">f7</div><div class="a" style="left:423.6px;top:561.8px;width:1.8px;height:1.8px;background:#8f8f8f"></div><div class="a m" style="left:113.0px;top:556px;line-height:14px;color:#101010">a6</div><div class="a" style="left:430.6px;top:561.8px;width:1.8px;height:1.8px;background:#8f8f8f"></div><div class="a m" style="left:134.0px;top:556px;line-height:14px;color:#101010">00</div><div class="a" style="left:437.6px;top:561.8px;width:1.8px;height:1.8px;background:#8f8f8f"></div><div class="a m" style="left:155.0px;top:556px;line-height:14px;color:#101010">00</div><div class="a" style="left:444.6px;top:561.8px;width:1.8px;height:1.8px;background:#8f8f8f"></div><div class="a m" style="left:176.0px;top:556px;line-height:14px;color:#101010">04</div><div class="a" style="left:451.6px;top:561.8px;width:1.8px;height:1.8px;background:#8f8f8f"></div><div class="a m" style="left:197.0px;top:556px;line-height:14px;color:#101010">34</div><div class="a m" style="left:456.0px;top:556px;line-height:14px;color:#101010">4</div><div class="a m" style="left:225.0px;top:556px;line-height:14px;color:#101010">06</div><div class="a" style="left:472.6px;top:561.8px;width:1.8px;height:1.8px;background:#8f8f8f"></div><div class="a m" style="left:246.0px;top:556px;line-height:14px;color:#101010">14</div><div class="a" style="left:479.6px;top:561.8px;width:1.8px;height:1.8px;background:#8f8f8f"></div><div class="a m" style="left:267.0px;top:556px;line-height:14px;color:#101010">84</div><div class="a" style="left:486.6px;top:561.8px;width:1.8px;height:1.8px;background:#8f8f8f"></div><div class="a m" style="left:288.0px;top:556px;line-height:14px;color:#101010">aa</div><div class="a" style="left:493.6px;top:561.8px;width:1.8px;height:1.8px;background:#8f8f8f"></div><div class="a m" style="left:309.0px;top:556px;line-height:14px;color:#101010">c1</div><div class="a" style="left:500.6px;top:561.8px;width:1.8px;height:1.8px;background:#8f8f8f"></div><div class="a m" style="left:330.0px;top:556px;line-height:14px;color:#101010">3c</div><div class="a m" style="left:505.0px;top:556px;line-height:14px;color:#101010">&lt;</div><div class="a m" style="left:351.0px;top:556px;line-height:14px;color:#101010">65</div><div class="a m" style="left:512.0px;top:556px;line-height:14px;color:#101010">e</div><div class="a m" style="left:372.0px;top:556px;line-height:14px;color:#101010">f0</div><div class="a" style="left:521.6px;top:561.8px;width:1.8px;height:1.8px;background:#8f8f8f"></div><div class="a m" style="left:8.5px;top:570px;line-height:14px;color:#a4a4a4;letter-spacing:-.2px">0050</div><div class="a m" style="left:50.0px;top:570px;line-height:14px;color:#101010">9d</div><div class="a" style="left:409.6px;top:575.8px;width:1.8px;height:1.8px;background:#8f8f8f"></div><div class="a m" style="left:71.0px;top:570px;line-height:14px;color:#101010">9e</div><div class="a" style="left:416.6px;top:575.8px;width:1.8px;height:1.8px;background:#8f8f8f"></div><div class="a m" style="left:92.0px;top:570px;line-height:14px;color:#101010">63</div><div class="a m" style="left:421.0px;top:570px;line-height:14px;color:#101010">c</div><div class="a m" style="left:113.0px;top:570px;line-height:14px;color:#101010">ac</div><div class="a" style="left:430.6px;top:575.8px;width:1.8px;height:1.8px;background:#8f8f8f"></div><div class="a m" style="left:134.0px;top:570px;line-height:14px;color:#101010">1b</div><div class="a" style="left:437.6px;top:575.8px;width:1.8px;height:1.8px;background:#8f8f8f"></div><div class="a m" style="left:155.0px;top:570px;line-height:14px;color:#101010">c6</div><div class="a" style="left:444.6px;top:575.8px;width:1.8px;height:1.8px;background:#8f8f8f"></div><div class="a m" style="left:176.0px;top:570px;line-height:14px;color:#101010">f1</div><div class="a" style="left:451.6px;top:575.8px;width:1.8px;height:1.8px;background:#8f8f8f"></div><div class="a m" style="left:197.0px;top:570px;line-height:14px;color:#101010">50</div><div class="a m" style="left:456.0px;top:570px;line-height:14px;color:#101010">P</div><div class="a m" style="left:225.0px;top:570px;line-height:14px;color:#101010">f9</div><div class="a" style="left:472.6px;top:575.8px;width:1.8px;height:1.8px;background:#8f8f8f"></div><div class="a m" style="left:246.0px;top:570px;line-height:14px;color:#101010">8c</div><div class="a" style="left:479.6px;top:575.8px;width:1.8px;height:1.8px;background:#8f8f8f"></div><div class="a m" style="left:267.0px;top:570px;line-height:14px;color:#101010">00</div><div class="a" style="left:486.6px;top:575.8px;width:1.8px;height:1.8px;background:#8f8f8f"></div><div class="a m" style="left:288.0px;top:570px;line-height:14px;color:#101010">00</div><div class="a" style="left:493.6px;top:575.8px;width:1.8px;height:1.8px;background:#8f8f8f"></div><div class="a m" style="left:309.0px;top:570px;line-height:14px;color:#101010">01</div><div class="a" style="left:500.6px;top:575.8px;width:1.8px;height:1.8px;background:#8f8f8f"></div><div class="a m" style="left:330.0px;top:570px;line-height:14px;color:#101010">02</div><div class="a" style="left:507.6px;top:575.8px;width:1.8px;height:1.8px;background:#8f8f8f"></div><div class="a m" style="left:351.0px;top:570px;line-height:14px;color:#101010">63</div><div class="a m" style="left:512.0px;top:570px;line-height:14px;color:#101010">c</div><div class="a m" style="left:372.0px;top:570px;line-height:14px;color:#101010">75</div><div class="a m" style="left:519.0px;top:570px;line-height:14px;color:#101010">u</div><div class="a m" style="left:8.5px;top:584px;line-height:14px;color:#a4a4a4;letter-spacing:-.2px">0060</div><div class="a m" style="left:50.0px;top:584px;line-height:14px;color:#101010">72</div><div class="a m" style="left:407.0px;top:584px;line-height:14px;color:#101010">r</div><div class="a m" style="left:71.0px;top:584px;line-height:14px;color:#101010">76</div><div class="a m" style="left:414.0px;top:584px;line-height:14px;color:#101010">v</div><div class="a m" style="left:92.0px;top:584px;line-height:14px;color:#101010">65</div><div class="a m" style="left:421.0px;top:584px;line-height:14px;color:#101010">e</div><div class="a m" style="left:113.0px;top:584px;line-height:14px;color:#101010">32</div><div class="a m" style="left:428.0px;top:584px;line-height:14px;color:#101010">2</div><div class="a m" style="left:134.0px;top:584px;line-height:14px;color:#101010">35</div><div class="a m" style="left:435.0px;top:584px;line-height:14px;color:#101010">5</div><div class="a m" style="left:155.0px;top:584px;line-height:14px;color:#101010">35</div><div class="a m" style="left:442.0px;top:584px;line-height:14px;color:#101010">5</div><div class="a m" style="left:176.0px;top:584px;line-height:14px;color:#101010">31</div><div class="a m" style="left:449.0px;top:584px;line-height:14px;color:#101010">1</div><div class="a m" style="left:197.0px;top:584px;line-height:14px;color:#101010">39</div><div class="a m" style="left:456.0px;top:584px;line-height:14px;color:#101010">9</div><div class="a m" style="left:225.0px;top:584px;line-height:14px;color:#101010">2d</div><div class="a m" style="left:470.0px;top:584px;line-height:14px;color:#101010">-</div><div class="a m" style="left:246.0px;top:584px;line-height:14px;color:#101010">73</div><div class="a m" style="left:477.0px;top:584px;line-height:14px;color:#101010">s</div><div class="a m" style="left:267.0px;top:584px;line-height:14px;color:#101010">68</div><div class="a m" style="left:484.0px;top:584px;line-height:14px;color:#101010">h</div><div class="a m" style="left:288.0px;top:584px;line-height:14px;color:#101010">61</div><div class="a m" style="left:491.0px;top:584px;line-height:14px;color:#101010">a</div><div class="a m" style="left:309.0px;top:584px;line-height:14px;color:#101010">32</div><div class="a m" style="left:498.0px;top:584px;line-height:14px;color:#101010">2</div><div class="a m" style="left:330.0px;top:584px;line-height:14px;color:#101010">35</div><div class="a m" style="left:505.0px;top:584px;line-height:14px;color:#101010">5</div><div class="a m" style="left:351.0px;top:584px;line-height:14px;color:#101010">36</div><div class="a m" style="left:512.0px;top:584px;line-height:14px;color:#101010">6</div><div class="a m" style="left:372.0px;top:584px;line-height:14px;color:#101010">2c</div><div class="a m" style="left:519.0px;top:584px;line-height:14px;color:#101010">,</div><div class="a m" style="left:8.5px;top:598px;line-height:14px;color:#a4a4a4;letter-spacing:-.2px">0070</div><div class="a m" style="left:50.0px;top:598px;line-height:14px;color:#101010">63</div><div class="a m" style="left:407.0px;top:598px;line-height:14px;color:#101010">c</div><div class="a m" style="left:71.0px;top:598px;line-height:14px;color:#101010">75</div><div class="a m" style="left:414.0px;top:598px;line-height:14px;color:#101010">u</div><div class="a m" style="left:92.0px;top:598px;line-height:14px;color:#101010">72</div><div class="a m" style="left:421.0px;top:598px;line-height:14px;color:#101010">r</div><div class="a m" style="left:113.0px;top:598px;line-height:14px;color:#101010">76</div><div class="a m" style="left:428.0px;top:598px;line-height:14px;color:#101010">v</div><div class="a m" style="left:134.0px;top:598px;line-height:14px;color:#101010">65</div><div class="a m" style="left:435.0px;top:598px;line-height:14px;color:#101010">e</div><div class="a m" style="left:155.0px;top:598px;line-height:14px;color:#101010">32</div><div class="a m" style="left:442.0px;top:598px;line-height:14px;color:#101010">2</div><div class="a m" style="left:176.0px;top:598px;line-height:14px;color:#101010">35</div><div class="a m" style="left:449.0px;top:598px;line-height:14px;color:#101010">5</div><div class="a m" style="left:197.0px;top:598px;line-height:14px;color:#101010">35</div><div class="a m" style="left:456.0px;top:598px;line-height:14px;color:#101010">5</div><div class="a m" style="left:225.0px;top:598px;line-height:14px;color:#101010">31</div><div class="a m" style="left:470.0px;top:598px;line-height:14px;color:#101010">1</div><div class="a m" style="left:246.0px;top:598px;line-height:14px;color:#101010">39</div><div class="a m" style="left:477.0px;top:598px;line-height:14px;color:#101010">9</div><div class="a m" style="left:267.0px;top:598px;line-height:14px;color:#101010">2d</div><div class="a m" style="left:484.0px;top:598px;line-height:14px;color:#101010">-</div><div class="a m" style="left:288.0px;top:598px;line-height:14px;color:#101010">73</div><div class="a m" style="left:491.0px;top:598px;line-height:14px;color:#101010">s</div><div class="a m" style="left:309.0px;top:598px;line-height:14px;color:#101010">68</div><div class="a m" style="left:498.0px;top:598px;line-height:14px;color:#101010">h</div><div class="a m" style="left:330.0px;top:598px;line-height:14px;color:#101010">61</div><div class="a m" style="left:505.0px;top:598px;line-height:14px;color:#101010">a</div><div class="a m" style="left:351.0px;top:598px;line-height:14px;color:#101010">32</div><div class="a m" style="left:512.0px;top:598px;line-height:14px;color:#101010">2</div><div class="a m" style="left:372.0px;top:598px;line-height:14px;color:#101010">35</div><div class="a m" style="left:519.0px;top:598px;line-height:14px;color:#101010">5</div><div class="a m" style="left:8.5px;top:612px;line-height:14px;color:#a4a4a4;letter-spacing:-.2px">0080</div><div class="a m" style="left:50.0px;top:612px;line-height:14px;color:#101010">36</div><div class="a m" style="left:407.0px;top:612px;line-height:14px;color:#101010">6</div><div class="a m" style="left:71.0px;top:612px;line-height:14px;color:#101010">40</div><div class="a m" style="left:414.0px;top:612px;line-height:14px;color:#101010">@</div><div class="a m" style="left:92.0px;top:612px;line-height:14px;color:#101010">6c</div><div class="a m" style="left:421.0px;top:612px;line-height:14px;color:#101010">l</div><div class="a m" style="left:113.0px;top:612px;line-height:14px;color:#101010">69</div><div class="a m" style="left:428.0px;top:612px;line-height:14px;color:#101010">i</div><div class="a m" style="left:134.0px;top:612px;line-height:14px;color:#101010">62</div><div class="a m" style="left:435.0px;top:612px;line-height:14px;color:#101010">b</div><div class="a m" style="left:155.0px;top:612px;line-height:14px;color:#101010">73</div><div class="a m" style="left:442.0px;top:612px;line-height:14px;color:#101010">s</div><div class="a m" style="left:176.0px;top:612px;line-height:14px;color:#101010">73</div><div class="a m" style="left:449.0px;top:612px;line-height:14px;color:#101010">s</div><div class="a m" style="left:197.0px;top:612px;line-height:14px;color:#101010">68</div><div class="a m" style="left:456.0px;top:612px;line-height:14px;color:#101010">h</div><div class="a m" style="left:225.0px;top:612px;line-height:14px;color:#101010">2e</div><div class="a m" style="left:470.0px;top:612px;line-height:14px;color:#101010">.</div><div class="a m" style="left:246.0px;top:612px;line-height:14px;color:#101010">6f</div><div class="a m" style="left:477.0px;top:612px;line-height:14px;color:#101010">o</div><div class="a m" style="left:267.0px;top:612px;line-height:14px;color:#101010">72</div><div class="a m" style="left:484.0px;top:612px;line-height:14px;color:#101010">r</div><div class="a m" style="left:288.0px;top:612px;line-height:14px;color:#101010">67</div><div class="a m" style="left:491.0px;top:612px;line-height:14px;color:#101010">g</div><div class="a m" style="left:309.0px;top:612px;line-height:14px;color:#101010">2c</div><div class="a m" style="left:498.0px;top:612px;line-height:14px;color:#101010">,</div><div class="a m" style="left:330.0px;top:612px;line-height:14px;color:#101010">65</div><div class="a m" style="left:505.0px;top:612px;line-height:14px;color:#101010">e</div><div class="a m" style="left:351.0px;top:612px;line-height:14px;color:#101010">63</div><div class="a m" style="left:512.0px;top:612px;line-height:14px;color:#101010">c</div><div class="a m" style="left:372.0px;top:612px;line-height:14px;color:#101010">64</div><div class="a m" style="left:519.0px;top:612px;line-height:14px;color:#101010">d</div><div class="a m" style="left:8.5px;top:626px;line-height:14px;color:#a4a4a4;letter-spacing:-.2px">0090</div><div class="a m" style="left:50.0px;top:626px;line-height:14px;color:#101010">68</div><div class="a m" style="left:407.0px;top:626px;line-height:14px;color:#101010">h</div><div class="a m" style="left:71.0px;top:626px;line-height:14px;color:#101010">2d</div><div class="a m" style="left:414.0px;top:626px;line-height:14px;color:#101010">-</div><div class="a m" style="left:92.0px;top:626px;line-height:14px;color:#101010">73</div><div class="a m" style="left:421.0px;top:626px;line-height:14px;color:#101010">s</div><div class="a m" style="left:113.0px;top:626px;line-height:14px;color:#101010">68</div><div class="a m" style="left:428.0px;top:626px;line-height:14px;color:#101010">h</div><div class="a m" style="left:134.0px;top:626px;line-height:14px;color:#101010">61</div><div class="a m" style="left:435.0px;top:626px;line-height:14px;color:#101010">a</div><div class="a m" style="left:155.0px;top:626px;line-height:14px;color:#101010">32</div><div class="a m" style="left:442.0px;top:626px;line-height:14px;color:#101010">2</div><div class="a m" style="left:176.0px;top:626px;line-height:14px;color:#101010">2d</div><div class="a m" style="left:449.0px;top:626px;line-height:14px;color:#101010">-</div><div class="a m" style="left:197.0px;top:626px;line-height:14px;color:#101010">6e</div><div class="a m" style="left:456.0px;top:626px;line-height:14px;color:#101010">n</div><div class="a m" style="left:225.0px;top:626px;line-height:14px;color:#101010">69</div><div class="a m" style="left:470.0px;top:626px;line-height:14px;color:#101010">i</div><div class="a m" style="left:246.0px;top:626px;line-height:14px;color:#101010">73</div><div class="a m" style="left:477.0px;top:626px;line-height:14px;color:#101010">s</div><div class="a m" style="left:267.0px;top:626px;line-height:14px;color:#101010">74</div><div class="a m" style="left:484.0px;top:626px;line-height:14px;color:#101010">t</div><div class="a m" style="left:288.0px;top:626px;line-height:14px;color:#101010">70</div><div class="a m" style="left:491.0px;top:626px;line-height:14px;color:#101010">p</div><div class="a m" style="left:309.0px;top:626px;line-height:14px;color:#101010">32</div><div class="a m" style="left:498.0px;top:626px;line-height:14px;color:#101010">2</div><div class="a m" style="left:330.0px;top:626px;line-height:14px;color:#101010">35</div><div class="a m" style="left:505.0px;top:626px;line-height:14px;color:#101010">5</div><div class="a m" style="left:351.0px;top:626px;line-height:14px;color:#101010">36</div><div class="a m" style="left:512.0px;top:626px;line-height:14px;color:#101010">6</div><div class="a m" style="left:372.0px;top:626px;line-height:14px;color:#101010">2c</div><div class="a m" style="left:519.0px;top:626px;line-height:14px;color:#101010">,</div><div class="a m" style="left:8.5px;top:640px;line-height:14px;color:#a4a4a4;letter-spacing:-.2px">00a0</div><div class="a m" style="left:50.0px;top:640px;line-height:14px;color:#101010">65</div><div class="a m" style="left:407.0px;top:640px;line-height:14px;color:#101010">e</div><div class="a m" style="left:71.0px;top:640px;line-height:14px;color:#101010">63</div><div class="a m" style="left:414.0px;top:640px;line-height:14px;color:#101010">c</div><div class="a m" style="left:92.0px;top:640px;line-height:14px;color:#101010">64</div><div class="a m" style="left:421.0px;top:640px;line-height:14px;color:#101010">d</div><div class="a m" style="left:113.0px;top:640px;line-height:14px;color:#101010">68</div><div class="a m" style="left:428.0px;top:640px;line-height:14px;color:#101010">h</div><div class="a m" style="left:134.0px;top:640px;line-height:14px;color:#101010">2d</div><div class="a m" style="left:435.0px;top:640px;line-height:14px;color:#101010">-</div><div class="a m" style="left:155.0px;top:640px;line-height:14px;color:#101010">73</div><div class="a m" style="left:442.0px;top:640px;line-height:14px;color:#101010">s</div><div class="a m" style="left:176.0px;top:640px;line-height:14px;color:#101010">68</div><div class="a m" style="left:449.0px;top:640px;line-height:14px;color:#101010">h</div><div class="a m" style="left:197.0px;top:640px;line-height:14px;color:#101010">61</div><div class="a m" style="left:456.0px;top:640px;line-height:14px;color:#101010">a</div><div class="a m" style="left:225.0px;top:640px;line-height:14px;color:#101010">32</div><div class="a m" style="left:470.0px;top:640px;line-height:14px;color:#101010">2</div><div class="a m" style="left:246.0px;top:640px;line-height:14px;color:#101010">2d</div><div class="a m" style="left:477.0px;top:640px;line-height:14px;color:#101010">-</div><div class="a m" style="left:267.0px;top:640px;line-height:14px;color:#101010">6e</div><div class="a m" style="left:484.0px;top:640px;line-height:14px;color:#101010">n</div><div class="a m" style="left:288.0px;top:640px;line-height:14px;color:#101010">69</div><div class="a m" style="left:491.0px;top:640px;line-height:14px;color:#101010">i</div><div class="a m" style="left:309.0px;top:640px;line-height:14px;color:#101010">73</div><div class="a m" style="left:498.0px;top:640px;line-height:14px;color:#101010">s</div><div class="a m" style="left:330.0px;top:640px;line-height:14px;color:#101010">74</div><div class="a m" style="left:505.0px;top:640px;line-height:14px;color:#101010">t</div><div class="a m" style="left:351.0px;top:640px;line-height:14px;color:#101010">70</div><div class="a m" style="left:512.0px;top:640px;line-height:14px;color:#101010">p</div><div class="a m" style="left:372.0px;top:640px;line-height:14px;color:#101010">33</div><div class="a m" style="left:519.0px;top:640px;line-height:14px;color:#101010">3</div><div class="a m" style="left:8.5px;top:654px;line-height:14px;color:#a4a4a4;letter-spacing:-.2px">00b0</div><div class="a m" style="left:50.0px;top:654px;line-height:14px;color:#101010">38</div><div class="a m" style="left:407.0px;top:654px;line-height:14px;color:#101010">8</div><div class="a m" style="left:71.0px;top:654px;line-height:14px;color:#101010">34</div><div class="a m" style="left:414.0px;top:654px;line-height:14px;color:#101010">4</div><div class="a m" style="left:92.0px;top:654px;line-height:14px;color:#101010">2c</div><div class="a m" style="left:421.0px;top:654px;line-height:14px;color:#101010">,</div><div class="a m" style="left:113.0px;top:654px;line-height:14px;color:#101010">65</div><div class="a m" style="left:428.0px;top:654px;line-height:14px;color:#101010">e</div><div class="a m" style="left:134.0px;top:654px;line-height:14px;color:#101010">63</div><div class="a m" style="left:435.0px;top:654px;line-height:14px;color:#101010">c</div><div class="a m" style="left:155.0px;top:654px;line-height:14px;color:#101010">64</div><div class="a m" style="left:442.0px;top:654px;line-height:14px;color:#101010">d</div><div class="a m" style="left:176.0px;top:654px;line-height:14px;color:#101010">68</div><div class="a m" style="left:449.0px;top:654px;line-height:14px;color:#101010">h</div><div class="a m" style="left:197.0px;top:654px;line-height:14px;color:#101010">2d</div><div class="a m" style="left:456.0px;top:654px;line-height:14px;color:#101010">-</div><div class="a m" style="left:225.0px;top:654px;line-height:14px;color:#101010">73</div><div class="a m" style="left:470.0px;top:654px;line-height:14px;color:#101010">s</div><div class="a m" style="left:246.0px;top:654px;line-height:14px;color:#101010">68</div><div class="a m" style="left:477.0px;top:654px;line-height:14px;color:#101010">h</div><div class="a m" style="left:267.0px;top:654px;line-height:14px;color:#101010">61</div><div class="a m" style="left:484.0px;top:654px;line-height:14px;color:#101010">a</div><div class="a m" style="left:288.0px;top:654px;line-height:14px;color:#101010">32</div><div class="a m" style="left:491.0px;top:654px;line-height:14px;color:#101010">2</div><div class="a m" style="left:309.0px;top:654px;line-height:14px;color:#101010">2d</div><div class="a m" style="left:498.0px;top:654px;line-height:14px;color:#101010">-</div><div class="a m" style="left:330.0px;top:654px;line-height:14px;color:#101010">6e</div><div class="a m" style="left:505.0px;top:654px;line-height:14px;color:#101010">n</div><div class="a m" style="left:351.0px;top:654px;line-height:14px;color:#101010">69</div><div class="a m" style="left:512.0px;top:654px;line-height:14px;color:#101010">i</div><div class="a m" style="left:372.0px;top:654px;line-height:14px;color:#101010">73</div><div class="a m" style="left:519.0px;top:654px;line-height:14px;color:#101010">s</div><div class="a m" style="left:8.5px;top:668px;line-height:14px;color:#a4a4a4;letter-spacing:-.2px">00c0</div><div class="a m" style="left:50.0px;top:668px;line-height:14px;color:#101010">74</div><div class="a m" style="left:407.0px;top:668px;line-height:14px;color:#101010">t</div><div class="a m" style="left:71.0px;top:668px;line-height:14px;color:#101010">70</div><div class="a m" style="left:414.0px;top:668px;line-height:14px;color:#101010">p</div><div class="a m" style="left:92.0px;top:668px;line-height:14px;color:#101010">35</div><div class="a m" style="left:421.0px;top:668px;line-height:14px;color:#101010">5</div><div class="a m" style="left:113.0px;top:668px;line-height:14px;color:#101010">32</div><div class="a m" style="left:428.0px;top:668px;line-height:14px;color:#101010">2</div><div class="a m" style="left:134.0px;top:668px;line-height:14px;color:#101010">31</div><div class="a m" style="left:435.0px;top:668px;line-height:14px;color:#101010">1</div><div class="a m" style="left:155.0px;top:668px;line-height:14px;color:#101010">2c</div><div class="a m" style="left:442.0px;top:668px;line-height:14px;color:#101010">,</div><div class="a m" style="left:176.0px;top:668px;line-height:14px;color:#101010">64</div><div class="a m" style="left:449.0px;top:668px;line-height:14px;color:#101010">d</div><div class="a m" style="left:197.0px;top:668px;line-height:14px;color:#101010">69</div><div class="a m" style="left:456.0px;top:668px;line-height:14px;color:#101010">i</div><div class="a m" style="left:225.0px;top:668px;line-height:14px;color:#101010">66</div><div class="a m" style="left:470.0px;top:668px;line-height:14px;color:#101010">f</div><div class="a m" style="left:246.0px;top:668px;line-height:14px;color:#101010">66</div><div class="a m" style="left:477.0px;top:668px;line-height:14px;color:#101010">f</div><div class="a m" style="left:267.0px;top:668px;line-height:14px;color:#101010">69</div><div class="a m" style="left:484.0px;top:668px;line-height:14px;color:#101010">i</div><div class="a m" style="left:288.0px;top:668px;line-height:14px;color:#101010">65</div><div class="a m" style="left:491.0px;top:668px;line-height:14px;color:#101010">e</div><div class="a m" style="left:309.0px;top:668px;line-height:14px;color:#101010">2d</div><div class="a m" style="left:498.0px;top:668px;line-height:14px;color:#101010">-</div><div class="a m" style="left:330.0px;top:668px;line-height:14px;color:#101010">68</div><div class="a m" style="left:505.0px;top:668px;line-height:14px;color:#101010">h</div><div class="a m" style="left:351.0px;top:668px;line-height:14px;color:#101010">65</div><div class="a m" style="left:512.0px;top:668px;line-height:14px;color:#101010">e</div><div class="a m" style="left:372.0px;top:668px;line-height:14px;color:#101010">6c</div><div class="a m" style="left:519.0px;top:668px;line-height:14px;color:#101010">l</div><div class="a" style="left:1009px;top:500px;width:14px;height:182px;background:#e6e6e6;border-left:1px solid #c6c6c6"></div><div class="a" style="left:1010px;top:500px;width:13px;height:13px;background:#fafafa"></div><div class="a" style="left:1010px;top:513px;width:13px;height:28px;background:#f8f8f8;border-top:1px solid #d6d6d6;border-bottom:1px solid #cfcfcf"></div><div class="a" style="left:1010px;top:669px;width:13px;height:13px;background:#fafafa;border-top:1px solid #d6d6d6"></div><svg style="left:1012px;top:503px" width="8" height="6"><path d="M0 5L4 1L8 5Z" fill="#505050"/></svg><svg style="left:1012px;top:673px" width="8" height="6"><path d="M0 1L4 5L8 1Z" fill="#505050"/></svg><div class="a" style="left:10px;top:687px;width:14px;height:14px;border-radius:50%;background:radial-gradient(circle at 40% 30%,#a9c8f0,#7aa6e0 70%,#6a96d6);border:1px solid #3d5a80"></div><svg style="left:0;top:680px" width="60" height="25"><rect x="33.5" y="7.5" width="11" height="13" fill="#f4f4ec" stroke="#c8c8c0" stroke-width="1"/><rect x="34" y="7" width="10" height="3" fill="#3c9ee0"/><path d="M37,10 C37.5,8.5 38.5,7.5 39.5,7.3 C39,8.3 39,9.2 39.2,10 Z" fill="#fff"/><path d="M35.5,13.5 H42 M35.5,16 H42 M35.5,18.5 H42" stroke="#d0d0c8" stroke-width=".8"/><path d="M46.3,8.3 L38.6,16.2" stroke="#3a3a3a" stroke-width="2.6" stroke-linecap="round"/><path d="M38.9,15.7 L37.2,17.3" stroke="#111" stroke-width="1.8" stroke-linecap="round"/></svg><div class="a t" style="left:63px;top:688px;letter-spacing:0.461px">Bytes 6-11: Source (sll.src.eth)</div><div class="a t" style="left:573px;top:688px;letter-spacing:0.421px">Packets: 26 · Displayed: 25 (96.2%) · Dropped: 0 (0.0%)</div><div class="a" style="left:916px;top:686px;width:1px;height:16px;border-left:1px dotted #b0b0b0"></div><div class="a t" style="left:929px;top:688px;letter-spacing:0.440px">Profile: Default</div><div class="a" style="left:505.5px;top:308px;width:1px;height:1px;background:#8e8e8e"></div><div class="a" style="left:508.5px;top:308px;width:1px;height:1px;background:#8e8e8e"></div><div class="a" style="left:511.5px;top:308px;width:1px;height:1px;background:#8e8e8e"></div><div class="a" style="left:514.5px;top:308px;width:1px;height:1px;background:#8e8e8e"></div><div class="a" style="left:517.5px;top:308px;width:1px;height:1px;background:#8e8e8e"></div><div class="a" style="left:520.5px;top:308px;width:1px;height:1px;background:#8e8e8e"></div><div class="a" style="left:505.5px;top:496px;width:1px;height:1px;background:#8e8e8e"></div><div class="a" style="left:508.5px;top:496px;width:1px;height:1px;background:#8e8e8e"></div><div class="a" style="left:511.5px;top:496px;width:1px;height:1px;background:#8e8e8e"></div><div class="a" style="left:514.5px;top:496px;width:1px;height:1px;background:#8e8e8e"></div><div class="a" style="left:517.5px;top:496px;width:1px;height:1px;background:#8e8e8e"></div><div class="a" style="left:520.5px;top:496px;width:1px;height:1px;background:#8e8e8e"></div></body></html>
